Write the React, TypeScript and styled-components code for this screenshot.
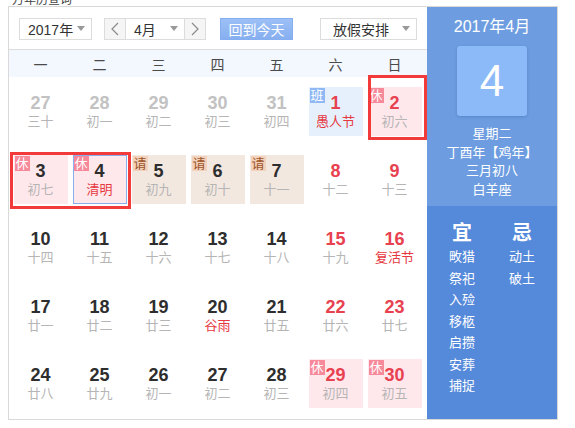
import React from "react";
import styled, { createGlobalStyle } from "styled-components";

type Mark = "rest" | "leave" | "work";

interface Day {
    num: number;
    lunar: string;
    other?: boolean;
    red?: boolean;
    fest?: boolean;
    mark?: Mark;
    today?: boolean;
}

const weeks: Day[][] = [
    [
        { num: 27, lunar: "三十", other: true },
        { num: 28, lunar: "初一", other: true },
        { num: 29, lunar: "初二", other: true },
        { num: 30, lunar: "初三", other: true },
        { num: 31, lunar: "初四", other: true },
        { num: 1, lunar: "愚人节", red: true, fest: true, mark: "work" },
        { num: 2, lunar: "初六", red: true, mark: "rest" },
    ],
    [
        { num: 3, lunar: "初七", mark: "rest" },
        { num: 4, lunar: "清明", fest: true, mark: "rest", today: true },
        { num: 5, lunar: "初九", mark: "leave" },
        { num: 6, lunar: "初十", mark: "leave" },
        { num: 7, lunar: "十一", mark: "leave" },
        { num: 8, lunar: "十二", red: true },
        { num: 9, lunar: "十三", red: true },
    ],
    [
        { num: 10, lunar: "十四" },
        { num: 11, lunar: "十五" },
        { num: 12, lunar: "十六" },
        { num: 13, lunar: "十七" },
        { num: 14, lunar: "十八" },
        { num: 15, lunar: "十九", red: true },
        { num: 16, lunar: "复活节", red: true, fest: true },
    ],
    [
        { num: 17, lunar: "廿一" },
        { num: 18, lunar: "廿二" },
        { num: 19, lunar: "廿三" },
        { num: 20, lunar: "谷雨", fest: true },
        { num: 21, lunar: "廿五" },
        { num: 22, lunar: "廿六", red: true },
        { num: 23, lunar: "廿七", red: true },
    ],
    [
        { num: 24, lunar: "廿八" },
        { num: 25, lunar: "廿九" },
        { num: 26, lunar: "初一" },
        { num: 27, lunar: "初二" },
        { num: 28, lunar: "初三" },
        { num: 29, lunar: "初四", red: true, mark: "rest" },
        { num: 30, lunar: "初五", red: true, mark: "rest" },
    ],
];

const weekdays = ["一", "二", "三", "四", "五", "六", "日"];
const yi = ["畋猎", "祭祀", "入殓", "移柩", "启攒", "安葬", "捕捉"];
const ji = ["动土", "破土"];

const markText: Record<Mark, string> = { rest: "休", leave: "请", work: "班" };

// annotation boxes drawn over the grid
const frames = [
    { left: 1, top: 75, width: 121, height: 57 },
    { left: 359, top: -2, width: 59, height: 65 },
];

export default function App(): React.ReactElement {
    return (
        <>
            <GlobalStyle />
            <Title>万年历查询</Title>
            <Calendar>
                <Main>
                    <Toolbar>
                        <Select $w={73}>
                            <span>2017年</span>
                            <Caret />
                        </Select>
                        <MonthGroup>
                            <NavButton>
                                <Chevron dir="left" />
                            </NavButton>
                            <Select $w={58} $inGroup>
                                <span>4月</span>
                                <Caret />
                            </Select>
                            <NavButton>
                                <Chevron dir="right" />
                            </NavButton>
                        </MonthGroup>
                        <TodayButton>回到今天</TodayButton>
                        <Select $w={97} $pad={12} $ml={27}>
                            <span>放假安排</span>
                            <Caret />
                        </Select>
                    </Toolbar>
                    <WeekHeader>
                        {weekdays.map((w) => (
                            <WeekLabel key={w}>{w}</WeekLabel>
                        ))}
                    </WeekHeader>
                    <Grid>
                        {weeks.flat().map((d, i) => (
                            <Slot key={i}>
                                <Cell $mark={d.mark} $today={d.today}>
                                    {d.mark && (
                                        <Badge $mark={d.mark}>
                                            {markText[d.mark]}
                                        </Badge>
                                    )}
                                    <DayNum $other={d.other} $red={d.red}>
                                        {d.num}
                                    </DayNum>
                                    <Lunar $fest={d.fest}>{d.lunar}</Lunar>
                                </Cell>
                            </Slot>
                        ))}
                        {frames.map((f, i) => (
                            <RedFrame key={i} style={f} />
                        ))}
                    </Grid>
                </Main>
                <Side>
                    <SideTop>
                        <SideMonth>2017年4月</SideMonth>
                        <BigDay>4</BigDay>
                        <SideInfo>
                            <div>星期二</div>
                            <div>丁酉年【鸡年】</div>
                            <div>三月初八</div>
                            <div>白羊座</div>
                        </SideInfo>
                    </SideTop>
                    <SideBottom>
                        <Column>
                            <ColHead>宜</ColHead>
                            {yi.map((t) => (
                                <ColItem key={t}>{t}</ColItem>
                            ))}
                        </Column>
                        <Column>
                            <ColHead>忌</ColHead>
                            {ji.map((t) => (
                                <ColItem key={t}>{t}</ColItem>
                            ))}
                        </Column>
                    </SideBottom>
                </Side>
            </Calendar>
        </>
    );
}

function Caret(): React.ReactElement {
    return <CaretShape />;
}

function Chevron({ dir }: { dir: "left" | "right" }): React.ReactElement {
    return (
        <svg width="8" height="14" viewBox="0 0 8 14">
            <path
                d={dir === "left" ? "M7 1 L1 7 L7 13" : "M1 1 L7 7 L1 13"}
                fill="none"
                stroke="#8a8a8a"
                strokeWidth="1.2"
            />
        </svg>
    );
}

const GlobalStyle = createGlobalStyle`
    body {
        margin: 0;
        padding: 0 0 0 8px;
        background: #fff;
        font-family: "Liberation Sans", "Noto Sans CJK SC", sans-serif;
        overflow: hidden;
    }
`;

// only the bottom edge of the page heading shows above the calendar
const Title = styled.div`
    height: 6px;
    overflow: hidden;
    padding-left: 4px;
    font-size: 12px;
    line-height: 0;
    color: #444;
`;

const Calendar = styled.div`
    display: flex;
    width: 548px;
    height: 412px;
    border: 1px solid #d9d9d9;
`;

const Main = styled.div`
    width: 418px;
    display: flex;
    flex-direction: column;
`;

const Toolbar = styled.div`
    box-sizing: border-box;
    height: 43px;
    border-bottom: 1px solid #dcdcdc;
    display: flex;
    align-items: center;
    padding: 1px 0 0 10px;
`;

const Select = styled.div<{ $w: number; $pad?: number; $ml?: number; $inGroup?: boolean }>`
    box-sizing: border-box;
    width: ${(p) => p.$w}px;
    height: 22px;
    margin-left: ${(p) => p.$ml ?? 0}px;
    border: 1px solid #dcdcdc;
    ${(p) => (p.$inGroup ? "border-left: none; border-right: none;" : "")}
    background: #fff;
    display: flex;
    align-items: center;
    justify-content: space-between;
    padding: 0 6px 0 ${(p) => p.$pad ?? 8}px;
    font-size: 14px;
    color: #333;
`;

const CaretShape = styled.i`
    width: 0;
    height: 0;
    border-left: 4px solid transparent;
    border-right: 4px solid transparent;
    border-top: 5px solid #999;
`;

const MonthGroup = styled.div`
    display: flex;
    margin-left: 12px;
`;

const NavButton = styled.div`
    box-sizing: border-box;
    width: 22px;
    height: 22px;
    border: 1px solid #dcdcdc;
    background: #f5f5f5;
    display: flex;
    align-items: center;
    justify-content: center;
`;

const TodayButton = styled.div`
    box-sizing: border-box;
    margin-left: 14px;
    width: 73px;
    height: 22px;
    background: linear-gradient(#9cc0f6, #87aff0);
    border: 1px solid #85aef0;
    color: #fff;
    font-size: 14px;
    display: flex;
    align-items: center;
    justify-content: center;
`;

const WeekHeader = styled.div`
    display: grid;
    grid-template-columns: repeat(7, 59px);
    padding: 0 3px 0 2px;
    height: 27px;
    background: #f3f7fe;
    align-items: center;
`;

const WeekLabel = styled.div`
    text-align: center;
    font-size: 14px;
    color: #4a4a4a;
`;

const Grid = styled.div`
    position: relative;
    display: grid;
    grid-template-columns: repeat(7, 59px);
    grid-auto-rows: 68px;
    padding: 0 3px 0 2px;
`;

const Slot = styled.div`
    display: flex;
    align-items: center;
    justify-content: center;
`;

const cellBg: Record<Mark, string> = {
    rest: "#ffe8ec",
    leave: "#f3e8e0",
    work: "#e6f0fd",
};

const Cell = styled.div<{ $mark?: Mark; $today?: boolean }>`
    position: relative;
    box-sizing: border-box;
    width: 54px;
    height: 49px;
    padding-top: 6px;
    margin-top: 1px;
    background: ${(p) => (p.$mark ? cellBg[p.$mark] : "transparent")};
    border: 1px solid ${(p) => (p.$today ? "#88b0ef" : "transparent")};
    text-align: center;
`;

const badgeStyle: Record<Mark, string> = {
    rest: "background:#f6899a;color:#fff;",
    leave: "background:#f2d2bc;color:#9c5428;",
    work: "background:#8fb8f4;color:#fff;",
};

const Badge = styled.span<{ $mark: Mark }>`
    position: absolute;
    left: 0;
    top: 0;
    width: 15px;
    height: 15px;
    font-size: 13px;
    line-height: 15px;
    text-align: center;
    ${(p) => badgeStyle[p.$mark]}
`;

const DayNum = styled.div<{ $other?: boolean; $red?: boolean }>`
    font-size: 18px;
    font-weight: bold;
    line-height: 20px;
    margin-top: -1px;
    color: ${(p) => (p.$other ? "#c2c2c2" : p.$red ? "#e8414f" : "#2e2e2e")};
`;

const Lunar = styled.div<{ $fest?: boolean }>`
    font-size: 13px;
    line-height: 18px;
    color: ${(p) => (p.$fest ? "#e5383f" : "#b5b5b5")};
    white-space: nowrap;
`;

const RedFrame = styled.div`
    position: absolute;
    box-sizing: border-box;
    border: 3px solid #f23a3a;
    pointer-events: none;
`;

const Side = styled.div`
    width: 130px;
    display: flex;
    flex-direction: column;
    color: #fff;
`;

const SideTop = styled.div`
    height: 199px;
    background: #6d9de0;
    display: flex;
    flex-direction: column;
    align-items: center;
`;

const SideMonth = styled.div`
    font-size: 16px;
    margin-top: 10px;
    line-height: 20px;
`;

const BigDay = styled.div`
    margin-top: 9px;
    width: 70px;
    height: 70px;
    border-radius: 3px;
    background: #8cbaf9;
    box-shadow: 0 1px 3px rgba(40, 80, 150, 0.3);
    font-size: 44px;
    line-height: 70px;
    text-align: center;
`;

const SideInfo = styled.div`
    margin-top: 9px;
    font-size: 13px;
    line-height: 18.5px;
    text-align: center;
`;

const SideBottom = styled.div`
    flex: 1;
    background: #5589da;
    display: grid;
    grid-template-columns: 60px 60px;
    padding: 15px 5px 0;
`;

const Column = styled.div`
    display: flex;
    flex-direction: column;
    align-items: center;
`;

const ColHead = styled.div`
    font-size: 20px;
    font-weight: bold;
    line-height: 24px;
    margin-bottom: 1px;
`;

const ColItem = styled.div`
    font-size: 13px;
    line-height: 21.5px;
`;
